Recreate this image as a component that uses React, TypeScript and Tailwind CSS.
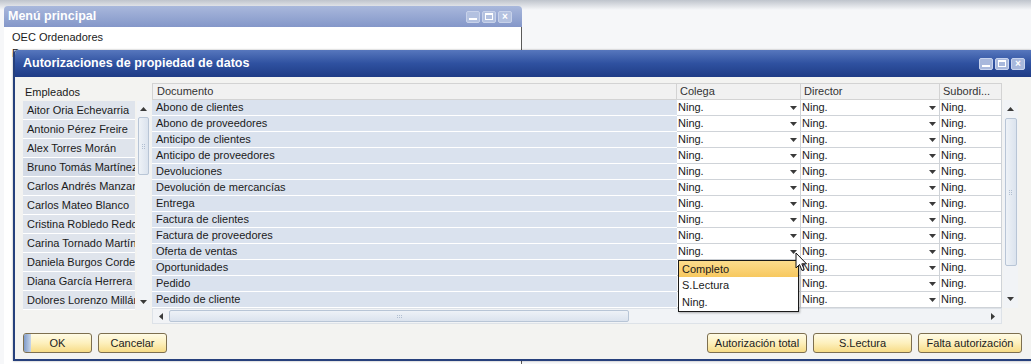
import React from "react";

const employees = [
  "Aitor Oria Echevarria",
  "Antonio Pérez Freire",
  "Alex Torres Morán",
  "Bruno Tomás Martínez",
  "Carlos Andrés Manzano",
  "Carlos Mateo Blanco",
  "Cristina Robledo Redondo",
  "Carina Tornado Martínez",
  "Daniela Burgos Cordero",
  "Diana García Herrera",
  "Dolores Lorenzo Millán",
];

const documents = [
  "Abono de clientes",
  "Abono de proveedores",
  "Anticipo de clientes",
  "Anticipo de proveedores",
  "Devoluciones",
  "Devolución de mercancías",
  "Entrega",
  "Factura de clientes",
  "Factura de proveedores",
  "Oferta de ventas",
  "Oportunidades",
  "Pedido",
  "Pedido de cliente",
];

function Caret({ dir = "down" }: { dir?: "down" | "up" | "left" | "right" }) {
  const pts = {
    down: "0,0 7,0 3.5,4",
    up: "0,4 7,4 3.5,0",
    left: "4,0 4,7 0,3.5",
    right: "0,0 0,7 4,3.5",
  }[dir];
  const horiz = dir === "left" || dir === "right";
  return (
    <svg width={horiz ? 4 : 7} height={horiz ? 7 : 4} className="shrink-0">
      <polygon points={pts} fill="#3a3a3a" />
    </svg>
  );
}

function Grip({ vertical = true }: { vertical?: boolean }) {
  return (
    <div className={`flex ${vertical ? "flex-col" : "flex-row"} gap-[1px] opacity-60`}>
      {[0, 1, 2].map((i) => (
        <div key={i} className={`flex ${vertical ? "flex-row" : "flex-col"} gap-[1px]`}>
          <div className="w-[1px] h-[1px] bg-[#8fa2bb]" />
          <div className="w-[1px] h-[1px] bg-[#8fa2bb]" />
        </div>
      ))}
    </div>
  );
}

function TitleButtons({ faded = false }: { faded?: boolean }) {
  const box = faded
    ? "w-[14px] h-[12px] rounded-[2px] bg-[#b3c1e0] border border-[#c8d2ea] flex items-center justify-center"
    : "w-[14px] h-[12px] rounded-[2px] bg-[#a8b8dc] border border-[#c7d3ee] flex items-center justify-center";
  return (
    <div className="flex gap-[2px]">
      <div className={box}>
        <div className="w-[8px] h-[2px] bg-white mt-[5px]" />
      </div>
      <div className={box}>
        <div className="w-[8px] h-[7px] border border-white border-t-2" />
      </div>
      <div className={box}>
        <span className="text-white text-[10px] leading-none font-bold">×</span>
      </div>
    </div>
  );
}

function YellowButton({ label, w, focus = false }: { label: string; w: string; focus?: boolean }) {
  return (
    <div
      className={`${w} h-[20px] rounded-[3px] border border-[#7d6f4f] bg-gradient-to-b from-[#fffbe6] via-[#fdf0bd] to-[#f7dc86] flex items-center justify-center relative overflow-hidden text-[11px] text-[#1c1c1c]`}
    >
      {focus && <div className="absolute left-0 top-0 bottom-0 w-[7px] bg-gradient-to-r from-[#7f9bc9] to-[#c8d6ea]" />}
      {label}
    </div>
  );
}

export default function App() {
  return (
    <div className="w-[1031px] h-[364px] relative overflow-hidden bg-[#f6f7f9] font-['Liberation_Sans',Arial,sans-serif] text-[#1a1a1a]">
      {/* desktop top shading */}
      <div className="absolute left-0 right-0 top-0 h-[10px] bg-gradient-to-b from-[#bfc4cc] to-[#f6f7f9]" />

      {/* Main menu window */}
      <div className="absolute left-[4px] top-[6px] w-[518px] h-[360px] flex flex-col">
        <div className="h-[21px] rounded-t-[4px] bg-gradient-to-b from-[#a9b8dc] to-[#8497c9] flex items-center justify-between pl-[4px] pr-[10px]">
          <span className="text-white font-bold text-[12.5px]">Menú principal</span>
          <TitleButtons faded />
        </div>
        <div className="flex-1 bg-white border-r border-[#5a5a5a] pl-[8px] pt-[2px] text-[11px] leading-[16px]">
          <div>OEC Ordenadores</div>
          <div>Documentos</div>
        </div>
      </div>

      {/* Dialog */}
      <div className="absolute left-[13px] top-[50px] w-[1018px] h-[311px] flex flex-col rounded-tl-[5px] overflow-hidden border-l-2 border-b-2 border-[#26407c] bg-[#f3f3f1] shadow-[0_0_2px_rgba(0,0,0,0.4)]">
        <div className="h-[27px] shrink-0 bg-gradient-to-b from-[#5777bd] via-[#2f51a0] to-[#1f3c86] flex items-center justify-between pl-[8px] pr-[6px]">
          <span className="text-white font-bold text-[12.5px]">Autorizaciones de propiedad de datos</span>
          <TitleButtons />
        </div>

        <div className="flex-1 flex flex-col pl-[8px] pt-[6px]">
          <div className="flex gap-[2px]">
            {/* Employees */}
            <div className="w-[127px] flex flex-col">
              <div className="h-[18px] flex items-center pl-[2px] text-[11px]">Empleados</div>
              <div className="flex h-[209px]">
                <div className="w-[112px] flex flex-col">
                  {employees.map((e, i) => (
                    <div
                      key={e}
                      className={`h-[19px] shrink-0 border-b border-white flex items-center pl-[4px] text-[11px] whitespace-nowrap overflow-hidden ${
                        i === 3 ? "bg-[#d3dae6]" : "bg-[#dfe4ec]"
                      }`}
                    >
                      {e}
                    </div>
                  ))}
                </div>
                <div className="w-[13px] ml-[2px] flex flex-col items-center bg-[#f1f3f6]">
                  <div className="h-[16px] flex items-center justify-center">
                    <Caret dir="up" />
                  </div>
                  <div className="w-[11px] h-[58px] rounded-[2px] border border-[#b8c5d6] bg-gradient-to-r from-[#eef2f7] to-[#dbe3ee] flex items-center justify-center">
                    <Grip />
                  </div>
                  <div className="flex-1" />
                  <div className="h-[16px] flex items-center justify-center">
                    <Caret dir="down" />
                  </div>
                </div>
              </div>
            </div>

            {/* Document grid */}
            <div className="w-[866px] relative flex flex-col">
              <div className="flex h-[17px] text-[11px] text-[#333]">
                <div className="w-[525px] bg-[#f1f1f1] border border-[#d3d3d3] flex items-center pl-[4px]">Documento</div>
                <div className="w-[124px] bg-[#f1f1f1] border-y border-r border-[#d3d3d3] flex items-center pl-[3px]">Colega</div>
                <div className="w-[139px] bg-[#f1f1f1] border-y border-r border-[#d3d3d3] flex items-center pl-[3px]">Director</div>
                <div className="w-[62px] bg-[#f1f1f1] border-y border-r border-[#d3d3d3] flex items-center pl-[3px]">Subordi...</div>
              </div>
              <div className="flex">
                <div className="w-[850px] flex flex-col">
                  {documents.map((d) => (
                    <div key={d} className="flex h-[16px] text-[11px]">
                      <div className="w-[525px] bg-[#dae2ee] border-b border-white flex items-center pl-[4px]">{d}</div>
                      <div className="w-[124px] bg-white border-b border-r border-[#cfd3d8] flex items-center justify-between pl-[1px] pr-[3px]">
                        <span>Ning.</span>
                        <Caret />
                      </div>
                      <div className="w-[139px] bg-white border-b border-r border-[#cfd3d8] flex items-center justify-between pl-[1px] pr-[3px]">
                        <span>Ning.</span>
                        <Caret />
                      </div>
                      <div className="w-[62px] bg-white border-b border-r border-[#cfd3d8] flex items-center pl-[1px]">
                        <span>Ning.</span>
                      </div>
                    </div>
                  ))}
                  {/* horizontal scrollbar */}
                  <div className="h-[16px] flex items-center bg-[#f1f3f6] border border-[#dde2e8]">
                    <div className="w-[16px] flex justify-center">
                      <Caret dir="left" />
                    </div>
                    <div className="w-[460px] h-[12px] rounded-[2px] border border-[#b8c5d6] bg-gradient-to-b from-[#eef2f7] to-[#dbe3ee] flex items-center justify-center">
                      <Grip vertical={false} />
                    </div>
                    <div className="flex-1" />
                    <div className="w-[16px] flex justify-center">
                      <Caret dir="right" />
                    </div>
                  </div>
                </div>
                {/* vertical scrollbar */}
                <div className="w-[15px] ml-[1px] h-[208px] flex flex-col items-center bg-[#f1f3f6]">
                  <div className="h-[18px] flex items-center justify-center">
                    <Caret dir="up" />
                  </div>
                  <div className="w-[12px] h-[148px] rounded-[2px] border border-[#b8c5d6] bg-gradient-to-r from-[#eef2f7] to-[#dbe3ee] flex items-center justify-center">
                    <Grip />
                  </div>
                  <div className="flex-1" />
                  <div className="h-[18px] flex items-center justify-center">
                    <Caret dir="down" />
                  </div>
                </div>
              </div>

              {/* dropdown list */}
              <div className="absolute left-[526px] top-[177px] w-[121px] bg-white border border-[#1a1a1a] flex flex-col text-[11px] shadow-[1px_1px_2px_rgba(0,0,0,0.3)]">
                <div className="h-[16px] flex items-center pl-[3px] bg-gradient-to-b from-[#fcdc8c] to-[#f7c85e]">Completo</div>
                <div className="h-[17px] flex items-center pl-[3px]">S.Lectura</div>
                <div className="h-[17px] flex items-center pl-[3px]">Ning.</div>
              </div>

              {/* mouse cursor */}
              <svg className="absolute left-[643px] top-[169px]" width="13" height="20" viewBox="0 0 13 20">
                <path d="M1 1 L1 16 L4.5 12.5 L7 18.5 L9.2 17.5 L6.8 11.8 L11.5 11.8 Z" fill="white" stroke="#111" strokeWidth="1" strokeLinejoin="round" />
              </svg>
            </div>
          </div>

          {/* buttons */}
          <div className="flex items-center mt-[9px] pr-[9px]">
            <div className="flex gap-[6px]">
              <YellowButton label="OK" w="w-[69px]" focus />
              <YellowButton label="Cancelar" w="w-[69px]" />
            </div>
            <div className="flex-1" />
            <div className="flex gap-[6px]">
              <YellowButton label="Autorización total" w="w-[100px]" />
              <YellowButton label="S.Lectura" w="w-[99px]" />
              <YellowButton label="Falta autorización" w="w-[104px]" />
            </div>
          </div>
        </div>
      </div>
    </div>
  );
}
